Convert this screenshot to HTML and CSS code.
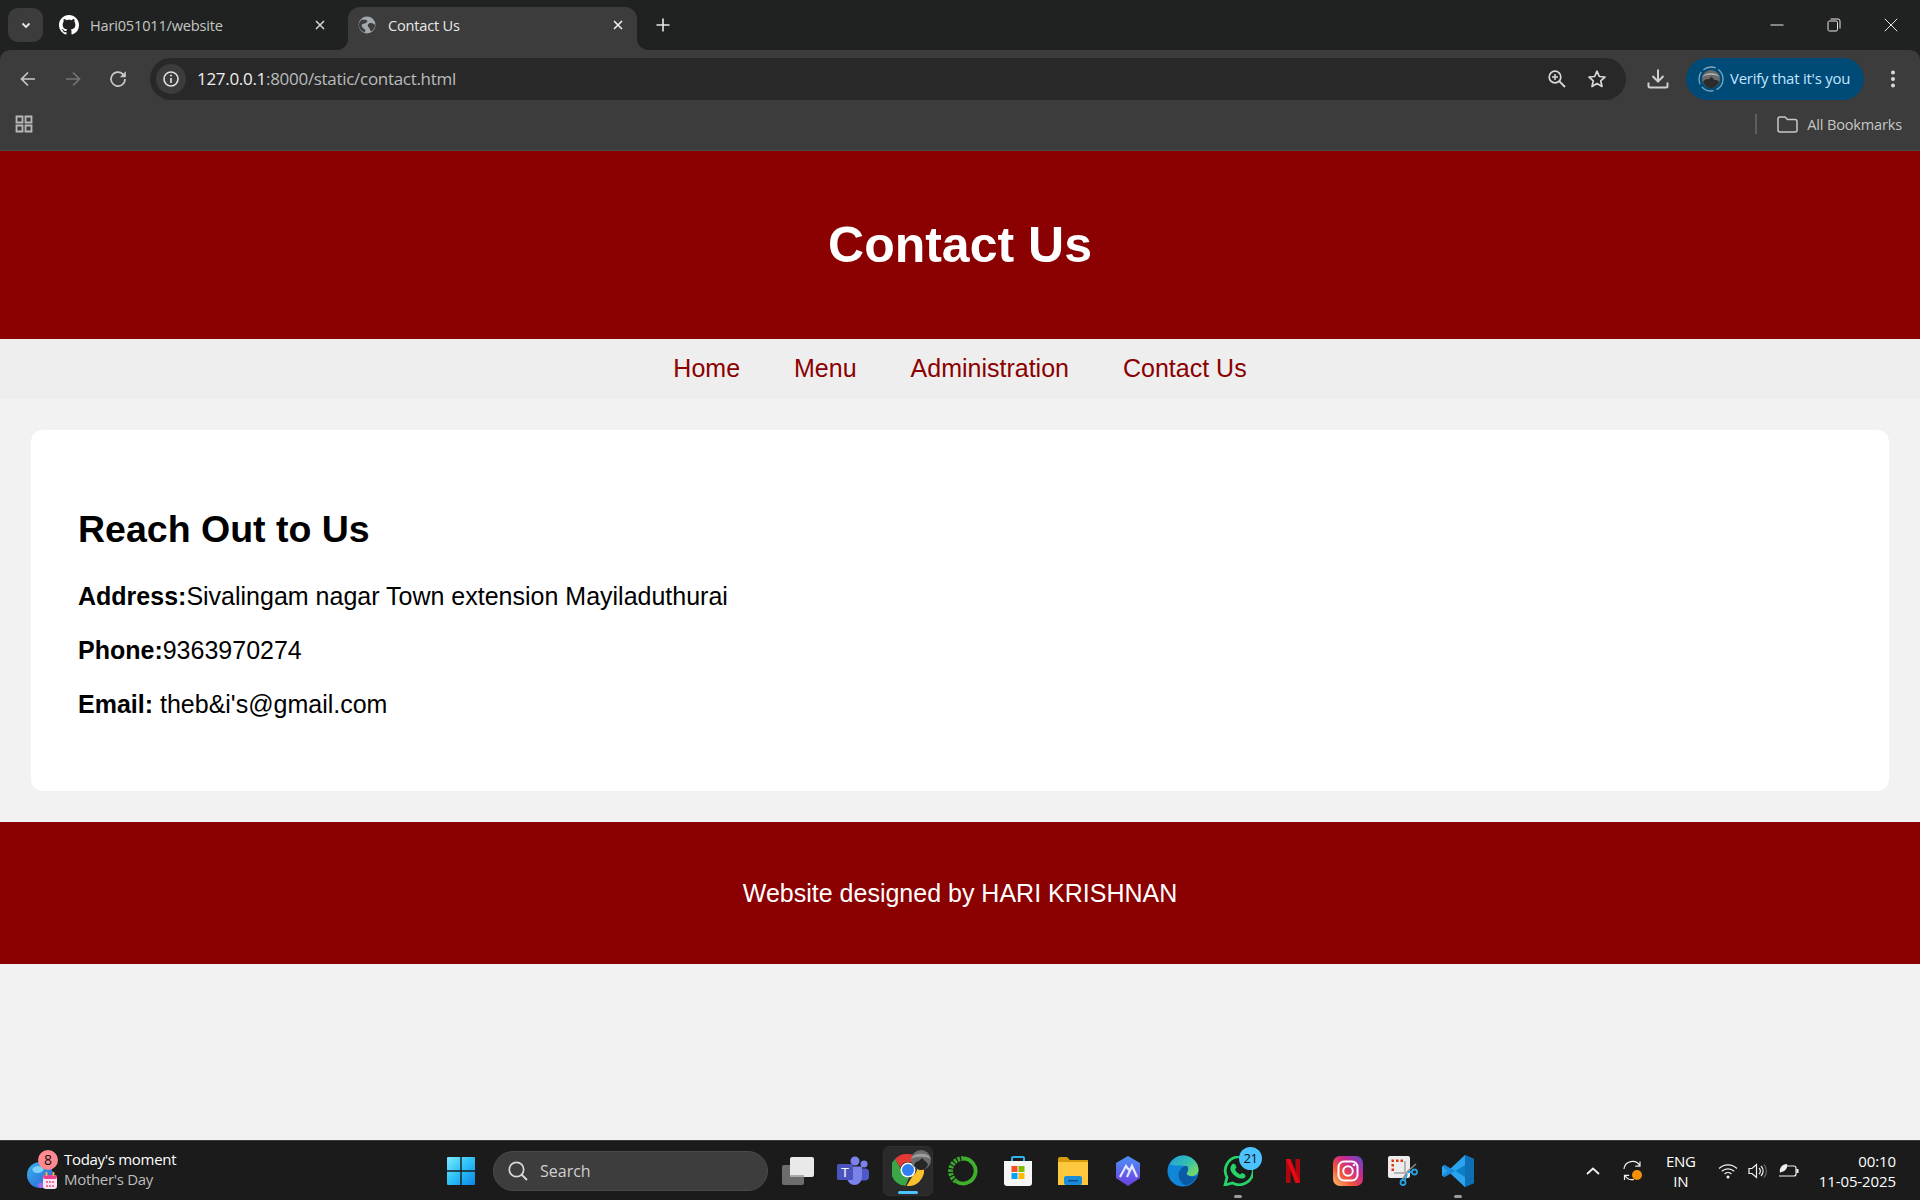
FILE: index.html
```html
<!DOCTYPE html>
<html lang="en">
<head>
<meta charset="utf-8">
<title>Contact Us</title>
<link rel="stylesheet" href="styles.css">
</head>
<body>
<div class="screen">
  <div class="browser">
    <div class="tabstrip">
      <div class="tabsearch"><svg width="12" height="12" viewBox="0 0 12 12"><path d="M2.5 4.5 6 8l3.5-3.5" fill="none" stroke="#e8e8e8" stroke-width="1.8"/></svg></div>
      <div class="tab">
        <svg class="favicon" width="20" height="20" viewBox="0 0 16 16"><path fill="#fff" d="M8 0C3.58 0 0 3.58 0 8c0 3.54 2.29 6.53 5.47 7.59.4.07.55-.17.55-.38 0-.19-.01-.82-.01-1.49-2.01.37-2.53-.49-2.69-.94-.09-.23-.48-.94-.82-1.13-.28-.15-.68-.52-.01-.53.63-.01 1.08.58 1.23.82.72 1.21 1.87.87 2.33.66.07-.52.28-.87.51-1.07-1.78-.2-3.64-.89-3.64-3.95 0-.87.31-1.59.82-2.15-.08-.2-.36-1.02.08-2.12 0 0 .67-.21 2.2.82.64-.18 1.32-.27 2-.27.68 0 1.36.09 2 .27 1.53-1.04 2.2-.82 2.2-.82.44 1.1.16 1.92.08 2.12.51.56.82 1.27.82 2.15 0 3.07-1.87 3.75-3.65 3.95.29.25.54.73.54 1.48 0 1.07-.01 1.93-.01 2.2 0 .21.15.46.55.38A8.013 8.013 0 0016 8c0-4.42-3.58-8-8-8z"/></svg>
        <span class="tabtitle dim">Hari051011/website</span>
        <svg class="tabclose" width="12" height="12" viewBox="0 0 12 12"><path d="M2 2l8 8M10 2l-8 8" stroke="#d8d8d8" stroke-width="1.5"/></svg>
      </div>
      <div class="tab active">
        <svg class="favicon small" width="18" height="18" viewBox="0 0 18 18"><circle cx="9" cy="9" r="8.5" fill="#a4a9af"/><path d="M4 3.5c2 .5 4-.5 5 1s-1 2.500-2.500 3S3 8 4 10.500s3 2 3.500 4l-1 2C3 15 .5 12 .8 8.500 1 6.500 2.500 4.500 4 3.500zM12 7c2 0 4 .5 5 2 0 3-2 5.500-4 6.500-1-1.500-1-3-2.500-4.500S10 7.500 12 7z" fill="#3e3e3e"/></svg>
        <span class="tabtitle">Contact Us</span>
        <svg class="tabclose" width="12" height="12" viewBox="0 0 12 12"><path d="M2 2l8 8M10 2l-8 8" stroke="#f0f0f0" stroke-width="1.600"/></svg>
      </div>
      <svg class="newtab" width="14" height="14" viewBox="0 0 14 14"><path d="M7 .5v13M.5 7h13" stroke="#e8e8e8" stroke-width="1.600"/></svg>
      <div class="wincontrols">
        <svg width="14" height="14" viewBox="0 0 14 14"><path d="M.5 7h13" stroke="#e8e8e8" stroke-width="1"/></svg>
        <svg width="14" height="14" viewBox="0 0 14 14"><rect x="1" y="3" width="9.500" height="10" rx="1.500" fill="none" stroke="#e8e8e8"/><path d="M3.500 1h7.500a2 2 0 0 1 2 2v7.500" fill="none" stroke="#e8e8e8"/></svg>
        <svg width="14" height="14" viewBox="0 0 14 14"><path d="M.8.800l12.400 12.400M13.200.800.800 13.200" stroke="#e8e8e8" stroke-width="1"/></svg>
      </div>
    </div>
    <div class="toolbar">
      <div class="navicons">
        <svg width="18" height="18" viewBox="0 0 18 18"><path d="M16 9H3M9 2.500 2.500 9 9 15.500" fill="none" stroke="#c8c8c8" stroke-width="1.700"/></svg>
        <svg width="18" height="18" viewBox="0 0 18 18"><path d="M2 9h13M9 2.500 15.500 9 9 15.500" fill="none" stroke="#747474" stroke-width="1.700"/></svg>
        <svg width="18" height="18" viewBox="0 0 18 18"><path d="M16 9a7 7 0 1 1-2.100-4.950L16 6" fill="none" stroke="#c8c8c8" stroke-width="1.700"/><path d="M16.800 1.200v6h-6z" fill="#c8c8c8"/></svg>
      </div>
      <div class="omnibox">
        <div class="siteinfo"><svg width="18" height="18" viewBox="0 0 18 18"><circle cx="9" cy="9" r="7" fill="none" stroke="#e0e0e0" stroke-width="1.600"/><path d="M9 8v5" stroke="#e0e0e0" stroke-width="1.700"/><circle cx="9" cy="5.600" r="1" fill="#e0e0e0"/></svg></div>
        <span class="url"><span class="urlhost">127.0.0.1</span>:8000/static/contact.html</span>
        <svg class="omniicon" width="20" height="20" viewBox="0 0 20 20"><circle cx="8" cy="8" r="5.800" fill="none" stroke="#d8d8d8" stroke-width="1.700"/><path d="M12.200 12.200 18 18" stroke="#d8d8d8" stroke-width="1.900"/><path d="M5 8h6M8 5v6" stroke="#d8d8d8" stroke-width="1.500"/></svg>
        <svg class="omniicon" width="20" height="20" viewBox="0 0 20 20"><path d="M10 2.200l2.300 5.300 5.700.5-4.300 3.800 1.300 5.700-5-3-5 3 1.300-5.700L2 8l5.700-.5z" fill="none" stroke="#d8d8d8" stroke-width="1.700" stroke-linejoin="round"/></svg>
      </div>
      <svg class="download" width="22" height="22" viewBox="0 0 22 22"><path d="M11 1.500V13M5.500 8 11 13.500 16.500 8" fill="none" stroke="#d0d0d0" stroke-width="2"/><path d="M1.500 14.500v3.500a1.500 1.500 0 0 0 1.500 1.500h16a1.500 1.500 0 0 0 1.500-1.500v-3.500" fill="none" stroke="#d0d0d0" stroke-width="2"/></svg>
      <div class="verify">
        <svg class="avatar" width="26" height="26" viewBox="0 0 26 26"><circle cx="13" cy="13" r="12" fill="none" stroke="#7fa6bf" stroke-width="1.300" stroke-dasharray="13 3"/><circle cx="13" cy="13" r="9" fill="#6a6a6a"/><path d="M4.500 11c3-3 14-3 17 0-2-5-15-5-17 0z" fill="#b5b5b5"/><path d="M5 16c3-4 4-2 6-3s2-3 3-2 2 3 3 3 3 0 4 2c-2 4-5 6-8 6s-6-2-8-6z" fill="#2b2b2b"/></svg>
        <span>Verify that it's you</span>
      </div>
      <svg class="kebab" width="6" height="18" viewBox="0 0 6 18"><circle cx="3" cy="2.500" r="2" fill="#d8d8d8"/><circle cx="3" cy="9" r="2" fill="#d8d8d8"/><circle cx="3" cy="15.500" r="2" fill="#d8d8d8"/></svg>
    </div>
    <div class="bookmarks">
      <svg width="18" height="18" viewBox="0 0 18 18"><path d="M1.500 1.500h6v6h-6zM10.500 1.500h6v6h-6zM1.500 10.500h6v6h-6zM10.500 10.500h6v6h-6z" fill="none" stroke="#b8b8b8" stroke-width="1.800"/></svg>
      <div class="bmspacer"></div>
      <div class="bmsep"></div>
      <svg width="21" height="17" viewBox="0 0 21 17"><path d="M1 3a2 2 0 0 1 2-2h5l2.500 2.500H18a2 2 0 0 1 2 2V14a2 2 0 0 1-2 2H3a2 2 0 0 1-2-2z" fill="none" stroke="#c8c8c8" stroke-width="1.500"/></svg>
      <span class="bmtext">All Bookmarks</span>
    </div>
  </div>

  <main class="page">
    <header class="hero"><h1>Contact Us</h1></header>
    <nav class="sitenav">
      <a href="#">Home</a>
      <a href="#">Menu</a>
      <a href="#">Administration</a>
      <a href="#">Contact Us</a>
    </nav>
    <section class="card">
      <h2>Reach Out to Us</h2>
      <p><strong>Address:</strong>Sivalingam nagar Town extension Mayiladuthurai</p>
      <p><strong>Phone:</strong>9363970274</p>
      <p><strong>Email:</strong> theb&amp;i's@gmail.com</p>
    </section>
    <footer class="sitefooter">Website designed by HARI KRISHNAN</footer>
  </main>

  <div class="taskbar">
    <div class="widget">
      <div class="widgeticon">
        <svg width="36" height="42" viewBox="0 0 36 42"><defs><linearGradient id="gl" x1="0" y1="0" x2="1" y2="1"><stop offset="0" stop-color="#39b3f0"/><stop offset="1" stop-color="#2a5fd0"/></linearGradient></defs><circle cx="13" cy="25" r="13" fill="url(#gl)"/><path d="M6 18c4-3 8-2 10 0s-2 5-5 5-7-2-5-5z" fill="#7fd3f7"/><path d="M10 35c3-3 5-3 8-2v5h-5z" fill="#9a6cf0"/><rect x="16" y="25" width="14" height="14" rx="3" fill="#f3e6ef"/><rect x="16" y="25" width="14" height="4" rx="2" fill="#ef3f8f"/><path d="M19.500 22v4M26.500 22v4" stroke="#ffb347" stroke-width="1.800"/><path d="M19 31h2v2h-2zM22 31h2v2h-2zM25 31h2v2h-2zM19 35h2v2h-2zM22 35h2v2h-2zM25 35h2v2h-2z" fill="#f76aa6"/></svg>
        <span class="widgetbadge">8</span>
      </div>
      <div class="widgettext"><span class="wt1">Today's moment</span><span class="wt2">Mother's Day</span></div>
    </div>
    <div class="tbcenter">
      <div class="tbitem">
        <svg width="30" height="30" viewBox="0 0 30 30"><defs><linearGradient id="wn" x1="0" y1="0" x2="1" y2="1"><stop offset="0" stop-color="#7beafe"/><stop offset=".5" stop-color="#2cc0f7"/><stop offset="1" stop-color="#0a86e6"/></linearGradient></defs><path d="M1 2a1 1 0 0 1 1-1h12.300v13.300H1zM15.700 1H28a1 1 0 0 1 1 1v12.300H15.700zM1 15.700h13.300V29H2a1 1 0 0 1-1-1zM15.700 15.700H29V28a1 1 0 0 1-1 1H15.700z" fill="url(#wn)"/></svg>
      </div>
      <div class="tbsearch">
        <svg width="22" height="22" viewBox="0 0 22 22"><circle cx="9.500" cy="9.500" r="7.200" fill="none" stroke="#d8d8d8" stroke-width="1.700"/><path d="M14.500 14.500 20 20" stroke="#d8d8d8" stroke-width="2"/></svg>
        <span>Search</span>
      </div>
      <div class="tbitem first">
        <svg width="32" height="28" viewBox="0 0 32 28"><rect x="0" y="8" width="22" height="20" rx="2" fill="#6d6d6d"/><rect x="8" y="0" width="24" height="20" rx="2" fill="#e9e9e9"/><rect x="8" y="18" width="14" height="2" fill="#aaa"/></svg>
      </div>
      <div class="tbitem">
        <svg width="32" height="30" viewBox="0 0 32 30"><circle cx="27" cy="8" r="3.500" fill="#7b83eb"/><rect x="21" y="12.500" width="11" height="12" rx="4" fill="#5059c9"/><circle cx="18" cy="5" r="4.500" fill="#7b83eb"/><path d="M10 10.500h15v11a7.500 7.500 0 0 1-15 0z" fill="#7b83eb"/><rect x="0" y="8" width="16" height="16" rx="1.500" fill="#4b53bc"/><text x="8" y="20.500" class="teamst">T</text></svg>
      </div>
      <div class="tbitem activeapp">
        <svg class="chrome" width="32" height="32" viewBox="0 0 32 32"><path d="M16 0a16 16 0 0 1 13.900 8H16a8 8 0 0 0-7.700 5.700L3 4.900A16 16 0 0 1 16 0z" fill="#e53935"/><path d="M3 4.900l7 12.100a7 7 0 0 0 7 6.700l-3.500 8.100A16 16 0 0 1 3 4.900z" fill="#3ba647"/><path d="M29.900 8A16 16 0 0 1 14.500 32l6.300-10.600A8 8 0 0 0 22 8z" fill="#fbc02d"/><circle cx="16" cy="16" r="7.500" fill="#fff"/><circle cx="16" cy="16" r="6" fill="#2f7ff0"/></svg>
        <svg class="chromeavatar" width="20" height="20" viewBox="0 0 20 20"><circle cx="10" cy="10" r="10" fill="#6d6d6d"/><path d="M0 9c4-3 16-3 20 0C18 2 2 2 0 9z" fill="#9e9e9e"/><path d="M3 15c2-5 4-3 6-5s3-2 4 0 3 1 4 5c-2 3-4 5-7 5s-5-2-7-5z" fill="#262626"/></svg>
        <span class="indicator wide"></span>
      </div>
      <div class="tbitem">
        <svg width="30" height="30" viewBox="0 0 30 30"><path d="M15 2.500a12.500 12.500 0 1 1-7 22.800" fill="none" stroke="#3fb02c" stroke-width="3.800"/><path d="M8 25.300A12.500 12.500 0 0 1 15 2.500" fill="none" stroke="#3aa82a" stroke-width="5" stroke-dasharray="2.500 1.200"/></svg>
      </div>
      <div class="tbitem">
        <svg width="30" height="32" viewBox="0 0 30 32"><path d="M9 8V3a1 1 0 0 1 1-1h10a1 1 0 0 1 1 1v5" fill="none" stroke="#2fb4ea" stroke-width="2"/><path d="M1 6h28v22a3 3 0 0 1-3 3H4a3 3 0 0 1-3-3z" fill="#f6f6f6"/><rect x="8.500" y="11" width="6" height="6" fill="#f25022"/><rect x="15.500" y="11" width="6" height="6" fill="#7fba00"/><rect x="8.500" y="18" width="6" height="6" fill="#00a4ef"/><rect x="15.500" y="18" width="6" height="6" fill="#ffb900"/></svg>
      </div>
      <div class="tbitem">
        <svg width="30" height="28" viewBox="0 0 30 28"><path d="M0 2a2 2 0 0 1 2-2h7l3 3h18v5H0z" fill="#d69c0b"/><path d="M0 5h30v23H0z" fill="#fdc83d"/><rect x="6" y="19" width="18" height="9" rx="2" fill="#1a8cd8"/><rect x="10" y="23" width="10" height="1.500" fill="#0d4f8f"/></svg>
      </div>
      <div class="tbitem">
        <svg width="28" height="30" viewBox="0 0 28 30"><defs><linearGradient id="ar" x1="0" y1="0" x2="0" y2="1"><stop offset="0" stop-color="#4d90f5"/><stop offset="1" stop-color="#6d3fe0"/></linearGradient></defs><path d="M14 0l12 7v15l-12 8L2 22V7z" fill="url(#ar)"/><path d="M6 21 12 10l3 4M13 21l5-11 5 11" fill="none" stroke="#e6e6ff" stroke-width="2.200"/></svg>
      </div>
      <div class="tbitem">
        <svg width="32" height="32" viewBox="0 0 32 32"><defs><linearGradient id="ed" x1="0" y1="0" x2="1" y2=".8"><stop offset="0" stop-color="#1f9edc"/><stop offset=".55" stop-color="#35c1b0"/><stop offset="1" stop-color="#7cdb5c"/></linearGradient></defs><circle cx="16" cy="16" r="15.500" fill="#0f86d8"/><path d="M3 9C6 3.500 11 .5 16 .5c9 0 15.500 7 15.500 14 0 4-3 6.500-7 6.500-3 0-5-1-5-2.500 3-3 1-8-5-8C9 10.500 5 11 3 9z" fill="url(#ed)"/><path d="M14 14c2-3 5-4 6.500-2.500s.5 4.500-1 6.500c0 2.500 3 3.500 6 3.500 2 0 4-.5 5-1.500-2 6-7 10-13 10.500-4-3-6-7-6-10.500 0-2.500 1-5 2.500-5.500z" fill="#0b5aa5"/></svg>
      </div>
      <div class="tbitem">
        <svg width="30" height="30" viewBox="0 0 30 30"><path d="M2 29l2-7.500A14 14 0 1 1 9.500 27z" fill="none" stroke="#25d366" stroke-width="2.800"/><path d="M10 8c2-1 3 2 3.500 3.500L12 13.500c1 2 3 4 5 5l2-1.500c1.500.5 4 1.500 3.500 3.500-1 2.500-4 2.500-7 1.500-4-1.500-7-5-8-8-.5-2 .5-5.500 2.500-6.500z" fill="#25d366"/></svg>
        <span class="tbbadge">21</span>
        <span class="indicator"></span>
      </div>
      <div class="tbitem">
        <svg width="14" height="24" viewBox="0 0 14 24"><path d="M0 0h4.500v24H0zM9.500 0H14v24H9.500z" fill="#b00610"/><path d="M0 0h4.500l9.500 24H9.500z" fill="#e50914"/></svg>
      </div>
      <div class="tbitem">
        <svg width="30" height="30" viewBox="0 0 30 30"><defs><linearGradient id="ig" x1="0" y1="1" x2="1" y2="0"><stop offset="0" stop-color="#fdc468"/><stop offset=".35" stop-color="#f2503b"/><stop offset=".65" stop-color="#c8288f"/><stop offset="1" stop-color="#5b4bd0"/></linearGradient></defs><rect width="30" height="30" rx="7" fill="url(#ig)"/><rect x="5.500" y="5.500" width="19" height="19" rx="5.500" fill="none" stroke="#fff" stroke-width="2"/><circle cx="15" cy="15" r="4.800" fill="none" stroke="#fff" stroke-width="2"/><circle cx="21" cy="9" r="1.300" fill="#fff"/></svg>
      </div>
      <div class="tbitem">
        <svg width="30" height="30" viewBox="0 0 30 30"><rect x="0" y="0" width="22" height="22" rx="2" fill="#ececec"/><path d="M3.500 3.500h2.500v2.500H3.500zM8 3.500h2.500v2.500H8zM12.500 3.500H15v2.500h-2.500zM3.500 8H6v2.500H3.500zM3.500 12.500H6V15H3.500z" fill="#d8390f"/><path d="M6 16h10V5h2v13H6z" fill="#b5b5b5"/><path d="M14 24 20 15 28 8" fill="none" stroke="#8d8d8d" stroke-width="1.500"/><circle cx="26.500" cy="16" r="2.500" fill="none" stroke="#2aa0e0" stroke-width="1.800"/><circle cx="15" cy="26.500" r="2.500" fill="none" stroke="#2aa0e0" stroke-width="1.800"/><path d="M24 16h-4M17 24l2-6" stroke="#2aa0e0" stroke-width="1.800"/></svg>
      </div>
      <div class="tbitem">
        <svg width="32" height="32" viewBox="0 0 32 32"><path d="M23 0 32 4v24l-9 4L8 18l5.500-4z" fill="#0a7fc8"/><path d="M23 0 8 14 2.500 10 0 11.500V20.500L2.500 22 8 18 23 32V22L13.500 16 23 10z" fill="#2aa4ef"/><path d="M23 0l9 4v24l-9 4z" fill="#0f6fb5"/><path d="M0 11.500 2.500 10 13.500 16 2.500 22 0 20.500l5.500-4.500z" fill="#1a8ad8"/></svg>
        <span class="indicator"></span>
      </div>
    </div>
    <div class="tray">
      <svg width="14" height="8" viewBox="0 0 14 8"><path d="M1 7 7 1.500 13 7" fill="none" stroke="#f2f2f2" stroke-width="1.800"/></svg>
      <svg class="sync" width="22" height="22" viewBox="0 0 22 22"><path d="M2 9a8.500 8.500 0 0 1 16-3M18 1.500V6.200h-4.700" fill="none" stroke="#f0f0f0" stroke-width="1.200"/><path d="M12 19.500A8.500 8.500 0 0 1 3 15.500M2.500 20v-4.700h4.700" fill="none" stroke="#f0f0f0" stroke-width="1.200"/><circle cx="15" cy="15" r="5" fill="#f79009"/></svg>
      <div class="lang"><span>ENG</span><span>IN</span></div>
      <div class="sysicons">
        <svg width="20" height="16" viewBox="0 0 20 16"><path d="M1 5.500a13 13 0 0 1 18 0M3.800 8.300a9 9 0 0 1 12.400 0M6.600 11a5 5 0 0 1 6.800 0" fill="none" stroke="#f2f2f2" stroke-width="1.200"/><circle cx="10" cy="14" r="1.500" fill="#f2f2f2"/></svg>
        <svg width="20" height="16" viewBox="0 0 20 16"><path d="M1 5.500h3L8.500 1.500v13L4 10.500H1z" fill="none" stroke="#f2f2f2" stroke-width="1.200"/><path d="M11 5a4 4 0 0 1 0 6M13 3a7 7 0 0 1 0 10" fill="none" stroke="#f2f2f2" stroke-width="1.200"/><path d="M16 1.500a10 10 0 0 1 0 13" fill="none" stroke="#666" stroke-width="1.200"/></svg>
        <svg width="21" height="16" viewBox="0 0 21 16"><path d="M8 3h8a2 2 0 0 1 2 2v6a2 2 0 0 1-2 2H1" fill="none" stroke="#f2f2f2" stroke-width="1.200"/><rect x="18.500" y="6" width="2" height="4" fill="#f2f2f2"/><path d="M2 10C1 5 4 1 9 1c1 4-2 8-6 8z" fill="#f2f2f2"/></svg>
      </div>
      <div class="clock"><span>00:10</span><span>11-05-2025</span></div>
    </div>
  </div>
</div>
</body>
</html>
```

FILE: styles.css
```css
* { box-sizing: border-box; }
html, body { margin: 0; padding: 0; }
body { font-family: "Liberation Sans", Arial, sans-serif; background: #f2f2f2; }
.screen { width: 1920px; height: 1200px; display: flex; flex-direction: column; overflow: hidden; }

/* browser chrome */
.browser { flex: none; height: 151px; display: flex; flex-direction: column; background: #202221; font-family: "Open Sans", sans-serif; color: #e8e8e8; }
.tabstrip { height: 50px; display: flex; align-items: flex-end; position: relative; padding-left: 8px; }
.tabsearch { width: 35px; height: 34px; margin-bottom: 8px; background: #3c3c3c; border-radius: 10px; display: flex; align-items: center; justify-content: center; }
.tab { width: 291px; height: 43px; display: flex; align-items: center; padding: 0 8.500px 7px 16px; font-size: 14.600px; position: relative; }
.tab.active { background: #3c3c3c; border-radius: 12px 12px 0 0; width: 289px; margin-left: 14px; padding: 0 13px 7px 10px; }
.tab.active::before, .tab.active::after { content: ""; position: absolute; bottom: 0; width: 12px; height: 12px; }
.tab.active::before { left: -12px; background: radial-gradient(circle at 0 0, transparent 12px, #3c3c3c 12.500px); }
.tab.active::after { right: -12px; background: radial-gradient(circle at 100% 0, transparent 12px, #3c3c3c 12.500px); }
.favicon { flex: none; margin-right: 11px; }
.favicon.small { margin-right: 12px; }
.tabtitle { flex: 1; white-space: nowrap; letter-spacing: -.2px; }
.tabtitle.dim { color: #c4c7c5; }
.tabclose { flex: none; }
.newtab { margin: 0 0 18px 19px; }
.wincontrols { margin-left: auto; display: flex; gap: 43px; padding-right: 22px; align-self: center; }

.toolbar { height: 50px; background: #3c3c3c; border-radius: 10px 10px 0 0; display: flex; align-items: flex-start; padding: 8px 0 0 19px; }
.navicons { display: flex; gap: 27px; margin-top: 12px; width: 131px; flex: none; }
.omnibox { width: 1476px; height: 42px; background: #282828; border-radius: 21px; display: flex; align-items: center; padding: 0 19px 0 6px; flex: none; }
.siteinfo { width: 30px; height: 30px; border-radius: 50%; background: #3c3c3c; display: flex; align-items: center; justify-content: center; flex: none; }
.url { margin: 0 0 1px 11px; font-size: 17px; color: #b9bcbc; flex: 1; letter-spacing: -.3px; white-space: nowrap; }
.urlhost { color: #efefef; }
.omniicon { flex: none; margin-left: 20px; }
.download { margin: 10px 0 0 21px; flex: none; }
.verify { margin-left: 17px; width: 178px; height: 42px; border-radius: 21px; background: #004a77; color: #c2e7ff; display: flex; align-items: center; padding: 0 0 2px 12px; font-size: 14.900px; letter-spacing: -.2px; white-space: nowrap; flex: none; }
.avatar { margin-right: 6px; margin-top: 2px; flex: none; }
.kebab { margin: 12px 0 0 26px; flex: none; }

.bookmarks { height: 51px; background: #3c3c3c; display: flex; align-items: center; padding: 0 18px 2px 15px; border-bottom: 1px solid #4a4a4a; }
.bmspacer { flex: 1; }
.bmsep { width: 2px; height: 20px; background: #5e5e5e; margin-right: 20px; }
.bmtext { margin-left: 9px; font-size: 14.600px; color: #c4c7c5; letter-spacing: -.2px; }

/* page */
.page { flex: 1; min-height: 0; display: flex; flex-direction: column; background: #f2f2f2; }
.hero { height: 188px; flex: none; background: #8b0000; display: flex; align-items: center; justify-content: center; }
.hero h1 { margin: 0; color: #fff; font-size: 50px; font-weight: 700; }
.sitenav { height: 60px; flex: none; background: #eee; display: flex; align-items: center; justify-content: center; gap: 54px; padding-bottom: 2px; }
.sitenav a { color: #8b0000; font-size: 25px; text-decoration: none; }
.card { flex: none; margin: 31px; height: 361px; background: #fff; border-radius: 12px; padding: 76px 47px 0; }
.card h2 { margin: 0 0 30px; font-size: 37.500px; line-height: 46px; color: #000; }
.card p { margin: 0 0 25px; font-size: 25px; line-height: 29px; color: #000; }
.sitefooter { flex: none; height: 142px; background: #8b0000; color: #fff; font-size: 25px; display: flex; align-items: center; justify-content: center; }

/* taskbar */
.taskbar { flex: none; height: 60px; background: #1b1b1b; border-top: 1px solid #3a3a3a; display: flex; align-items: center; font-family: "Open Sans", sans-serif; color: #fff; }
.widget { width: 433px; flex: none; display: flex; align-items: center; padding-left: 27px; }
.widgeticon { position: relative; width: 36px; height: 42px; flex: none; }
.widgetbadge { position: absolute; left: 11px; top: 0; width: 20px; height: 20px; border-radius: 50%; background: #ff8a8f; color: #111; font-size: 14px; display: flex; align-items: center; justify-content: center; }
.widgettext { display: flex; flex-direction: column; margin: -4px 0 0 1px; font-size: 15px; line-height: 20px; letter-spacing: -.3px; }
.wt1 { color: #fff; }
.wt2 { color: #bdbdbd; }
.tbcenter { display: flex; align-items: center; }
.tbitem { width: 55px; height: 50px; display: flex; align-items: center; justify-content: center; position: relative; flex: none; }
.tbitem.first { margin-left: 2px; }
.tbitem.activeapp { width: 50px; margin: 0 2.500px; background: #2a2a2a; border-radius: 6px; border: 1px solid #303030; }
.tbsearch { width: 275px; height: 40px; border-radius: 20px; background: #3d3d3d; border: 1px solid #4a4a4a; display: flex; align-items: center; padding-left: 13px; font-size: 16px; color: #cfcfcf; gap: 11px; margin-left: 5px; }
.chromeavatar { position: absolute; left: 27px; top: 3px; }
.chrome { margin-top: -2px; }
.indicator { position: absolute; bottom: -2px; left: 50%; width: 8px; height: 3px; margin-left: -4px; border-radius: 2px; background: #9b9b9b; }
.indicator.wide { width: 20px; margin-left: -10px; background: #4cc2ff; bottom: 1px; }
.tbbadge { position: absolute; left: 29px; top: 1px; width: 23px; height: 23px; border-radius: 50%; background: #4cc2ff; color: #111; font-size: 13px; letter-spacing: -.5px; display: flex; align-items: center; justify-content: center; }
.teamst { fill: #fff; font-size: 13px; font-family: "Liberation Sans", sans-serif; text-anchor: middle; }
.tray { margin-left: auto; display: flex; align-items: center; padding-right: 24px; font-size: 15px; }
.sync { margin-left: 22px; }
.lang { display: flex; flex-direction: column; align-items: center; line-height: 20px; margin-left: 22px; width: 30px; letter-spacing: -.3px; }
.sysicons { display: flex; gap: 10px; align-items: center; margin-left: 22px; }
.clock { display: flex; flex-direction: column; align-items: flex-end; line-height: 20px; margin-left: 20px; letter-spacing: -.1px; }
```
